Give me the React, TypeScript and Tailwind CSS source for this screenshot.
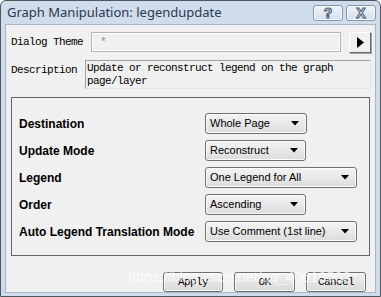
import React from "react";

// Win7-basic style dialog: "Graph Manipulation: legendupdate"

const mono = "font-['SimSun','Liberation_Mono','DejaVu_Sans_Mono',monospace] text-[11px] tracking-[-0.6px] whitespace-nowrap";
const sans = "font-['Liberation_Sans',Arial,sans-serif]";

interface ComboProps {
  value: string;
  width: string;
}

const Combo: React.FC<ComboProps> = ({ value, width }) => (
  <div
    className={`${width} h-[21px] flex items-center justify-between pl-[4px] pr-[7px] rounded-[3px] border border-[#707070] bg-gradient-to-b from-[#f4f4f4] to-[#dcdcdc] shadow-[inset_0_0_0_1px_#fcfcfc] text-[11px] text-black ${sans}`}
  >
    <span className="leading-none">{value}</span>
    <svg width="8" height="5" viewBox="0 0 8 5">
      <path d="M0 0 H8 L4 4.5 Z" fill="#000" />
    </svg>
  </div>
);

const rows: { label: string; value: string; width: string }[] = [
  { label: "Destination", value: "Whole Page", width: "w-[102px]" },
  { label: "Update Mode", value: "Reconstruct", width: "w-[101px]" },
  { label: "Legend", value: "One Legend for All", width: "w-[152px]" },
  { label: "Order", value: "Ascending", width: "w-[101px]" },
  { label: "Auto Legend Translation Mode", value: "Use Comment (1st line)", width: "w-[152px]" },
];

const DlgButton: React.FC<{ label: string; width: string }> = ({ label, width }) => (
  <button
    className={`${width} h-[20px] rounded-[3px] border border-[#707070] bg-gradient-to-b from-[#f2f2f2] to-[#d9d9d9] shadow-[inset_0_0_0_1px_#fbfbfb] text-black leading-none ${mono}`}
  >
    {label}
  </button>
);

const CaptionButton: React.FC<{ glyph: string }> = ({ glyph }) => (
  <div className="w-[30px] h-[16px] rounded-[3px] border border-[#8796aa] bg-gradient-to-b from-[#eef3f9] to-[#d3dfed] flex items-center justify-center shadow-[inset_0_0_0_1px_#f6f9fc]">
    <span
      className={`text-[14px] font-bold leading-none text-white [-webkit-text-stroke:1px_#4a5868] ${sans}`}
    >
      {glyph}
    </span>
  </div>
);

export default function App() {
  return (
    <div className="w-[381px] h-[297px] bg-[#cfdcec] border border-[#4f5660] rounded-t-[6px] flex flex-col px-[4px] pb-[3px]">
      {/* Title bar */}
      <div className="h-[23px] flex items-center justify-between pl-[2px] shrink-0">
        <span className="text-[13px] text-[#2a3a50] font-['Noto_Sans','Open_Sans',sans-serif] leading-none">
          Graph Manipulation: legendupdate
        </span>
        <div className="flex gap-[3px] self-start mt-[4px]">
          <CaptionButton glyph="?" />
          <CaptionButton glyph="X" />
        </div>
      </div>

      {/* Client area */}
      <div className="relative flex-1 bg-[#f0f0f0] border border-[#a9b7c9] flex flex-col">
        {/* Dialog Theme */}
        <div className="flex items-center mt-[7px] h-[20px]">
          <span className={`pl-[5px] w-[85px] text-black ${mono}`}>Dialog Theme</span>
          <div className="w-[250px] h-[20px] border border-[#b4b4b4] shadow-[inset_0_0_0_1px_#ffffff] bg-[#f0f0f0] flex items-center pl-[8px]">
            <span className={`text-[#8a8a8a] ${mono}`}>*</span>
          </div>
          <div className="ml-[8px] w-[22px] h-[21px] border border-t-[#ffffff] border-l-[#ffffff] border-r-[#696969] border-b-[#696969] shadow-[1px_1px_0_#a0a0a0] bg-[#f0f0f0] flex items-center justify-center">
            <svg width="7" height="11" viewBox="0 0 7 11">
              <path d="M0 0 L7 5.5 L0 11 Z" fill="#000" />
            </svg>
          </div>
        </div>

        {/* Description */}
        <div className="flex mt-[8px]">
          <span className={`pl-[5px] w-[79px] pt-[2px] text-black ${mono}`}>Description</span>
          <div
            className={`w-[286px] h-[29px] border border-[#a0a0a0] border-r-[#e3e3e3] border-b-[#e3e3e3] pl-[1px] pt-[1px] leading-[13px] text-black ${mono}`}
          >
            Update or reconstruct legend on the graph
            <br />
            page/layer
          </div>
        </div>

        {/* Group box */}
        <div className="mx-[5px] mt-[8px] h-[159px] border border-[#646464] pl-[7px] pt-[15px] flex flex-col gap-[6px]">
          {rows.map((r) => (
            <div key={r.label} className="grid grid-cols-[186px_1fr] items-center h-[21px]">
              <span className={`text-[12px] font-bold text-black ${sans}`}>{r.label}</span>
              <Combo value={r.value} width={r.width} />
            </div>
          ))}
        </div>

        {/* Buttons */}
        <div className="flex justify-end gap-[11px] pr-[9px] mt-[16px]">
          <DlgButton label="Apply" width="w-[60px]" />
          <DlgButton label="OK" width="w-[61px]" />
          <DlgButton label="Cancel" width="w-[60px]" />
        </div>

        {/* Watermark */}
        <span
          className={`absolute left-[122px] top-[242px] text-[14.5px] text-white/70 pointer-events-none ${sans}`}
        >
          https://blog.csdn.net/qq_40618502
        </span>
      </div>
    </div>
  );
}
